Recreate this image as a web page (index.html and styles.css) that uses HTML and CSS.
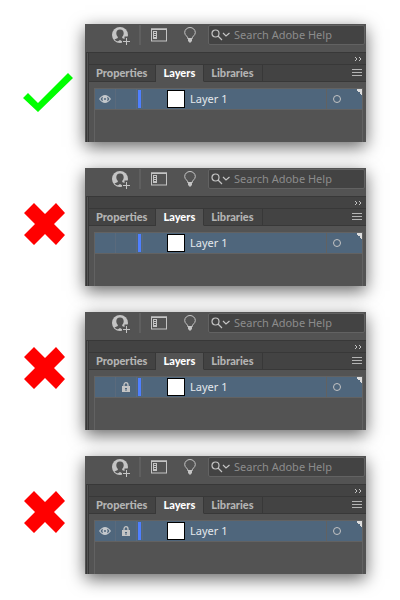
FILE: index.html
```
<!DOCTYPE html>
<html lang="en">
<head>
    <meta charset="UTF-8">
    <meta name="viewport" content="width=device-width, initial-scale=1.0">
    <title>Layers panel</title>
    <link rel="stylesheet" href="styles.css">
</head>
<body>
    <!-- Shared icons -->
    <svg class="sprite" aria-hidden="true">
        <symbol id="check" viewBox="0 0 52 84">
            <path fill="#0f0" d="M1 57l5-5 10 10 30-30 5 5-35 34z"/>
        </symbol>
        <symbol id="cross" viewBox="0 0 52 84">
            <path fill="#f00" d="M12 18l11 11 11-11 9 10-11 11 11 11-9 10-11-11-11 11-10-10 11-11-11-11z"/>
        </symbol>
        <symbol id="user" viewBox="0 0 20 20">
            <circle cx="9" cy="9" r="8" fill="#c4c4c4"/>
            <path fill="#535353" d="M9 3.500c2.500 0 3.700 1.500 3.700 3.700 0 1.600-.6 2.700-1.500 3.600v1.200l3.300 1.500c-1.300 1.400-2.500 1.800-3.500 1.800L9 14l-2 1.300c-1.200 0-2.500-.6-3.500-1.800L6.800 12v-1.200C5.900 9.900 5.300 8.800 5.300 7.200 5.300 5 6.500 3.500 9 3.500z"/>
            <path stroke="#535353" stroke-width="4" d="M15.500 10.500v9M11 15.500h9"/>
            <path stroke="#c4c4c4" d="M15.500 12v7M12 15.500h7"/>
        </symbol>
        <symbol id="window" viewBox="0 0 16 14">
            <rect x=".5" y="1" width="15" height="12" fill="none" stroke="#c4c4c4"/>
            <path fill="#c4c4c4" d="M0 .5h16v1.500H0zM2 3h4v8H2z"/>
            <path fill="#535353" d="M3 4h2v1H3zM3 6h2v1H3zM3 8h2v1H3z"/>
        </symbol>
        <symbol id="bulb" viewBox="0 0 12 16">
            <path fill="none" stroke="#c4c4c4" d="M4 12C4 9 .7 8.700.7 5.500a5.300 5 0 0 1 10.600 0C11.300 8.700 8 9 8 12"/>
            <path fill="#c4c4c4" d="M4 11h4v3l-2 2-2-2z"/>
        </symbol>
        <symbol id="search" viewBox="0 0 20 12">
            <g fill="none" stroke="#c4c4c4" stroke-width="1.200">
                <circle cx="4.500" cy="4.500" r="3.500"/>
                <path d="M7 7l4 4M12 4l3 3 3.500-3"/>
            </g>
        </symbol>
        <symbol id="expand" viewBox="0 0 8 6">
            <path fill="none" stroke="#c4c4c4" d="M1 1l2 2-2 2M5 1l2 2-2 2"/>
        </symbol>
        <symbol id="menu" viewBox="0 0 10 8">
            <path stroke="#b4b4b4" d="M0 .5h10M0 3.500h10M0 6.500h10"/>
        </symbol>
        <symbol id="eye" viewBox="0 0 12 8">
            <path fill="#c4c8cc" d="M0 4Q3 0 6 0t6 4Q9 8 6 8T0 4z"/>
            <path fill="#4f667c" d="M1.500 4Q2.500 2.200 4 1.700 2.800 4 4 6.300 2.500 5.800 1.500 4zM10.500 4Q9.500 2.200 8 1.700 9.200 4 8 6.300 9.500 5.800 10.500 4z"/>
            <circle cx="6" cy="4" r="1" fill="#4f667c"/>
        </symbol>
        <symbol id="lock" viewBox="0 0 8 10">
            <path fill="none" stroke="#c4c4c4" stroke-width="1.300" d="M2 5V3a2 2.300 0 0 1 4 0v2"/>
            <path fill="#c4c4c4" d="M0 4h8v6H0z"/>
            <path fill="#4f667c" d="M3 6h2v1H4.500v2h-1V7H3z"/>
        </symbol>
    </svg>

    <main class="examples">
        <section class="example">
            <svg class="mark" role="img" aria-label="Correct"><use href="#check"/></svg>
            <div class="app">
                <div class="toolbar">
                    <button class="tool user" aria-label="Account"><svg><use href="#user"/></svg></button>
                    <button class="tool window" aria-label="Workspace"><svg><use href="#window"/></svg></button>
                    <button class="tool bulb" aria-label="Learn"><svg><use href="#bulb"/></svg></button>
                    <label class="search">
                        <svg><use href="#search"/></svg>
                        <input type="text" placeholder="Search Adobe Help" aria-label="Search Adobe Help">
                    </label>
                </div>
                <div class="panel">
                    <div class="collapse"><button aria-label="Collapse"><svg><use href="#expand"/></svg></button></div>
                    <div class="tabs">
                        <button class="tab">Properties</button>
                        <button class="tab active">Layers</button>
                        <button class="tab">Libraries</button>
                        <button class="menu" aria-label="Panel menu"><svg><use href="#menu"/></svg></button>
                    </div>
                    <div class="layers">
                        <div class="layer">
                            <button class="toggle" aria-label="Visibility"><svg class="eye"><use href="#eye"/></svg></button>
                            <button class="toggle" aria-label="Lock"></button>
                            <span class="color"></span>
                            <span class="name"><span class="thumb"></span>Layer 1</span>
                            <button class="target" aria-label="Target"><span class="ring"></span></button>
                        </div>
                    </div>
                </div>
            </div>
        </section>

        <section class="example">
            <svg class="mark" role="img" aria-label="Wrong"><use href="#cross"/></svg>
            <div class="app">
                <div class="toolbar">
                    <button class="tool user" aria-label="Account"><svg><use href="#user"/></svg></button>
                    <button class="tool window" aria-label="Workspace"><svg><use href="#window"/></svg></button>
                    <button class="tool bulb" aria-label="Learn"><svg><use href="#bulb"/></svg></button>
                    <label class="search">
                        <svg><use href="#search"/></svg>
                        <input type="text" placeholder="Search Adobe Help" aria-label="Search Adobe Help">
                    </label>
                </div>
                <div class="panel">
                    <div class="collapse"><button aria-label="Collapse"><svg><use href="#expand"/></svg></button></div>
                    <div class="tabs">
                        <button class="tab">Properties</button>
                        <button class="tab active">Layers</button>
                        <button class="tab">Libraries</button>
                        <button class="menu" aria-label="Panel menu"><svg><use href="#menu"/></svg></button>
                    </div>
                    <div class="layers">
                        <div class="layer">
                            <button class="toggle" aria-label="Visibility"></button>
                            <button class="toggle" aria-label="Lock"></button>
                            <span class="color"></span>
                            <span class="name"><span class="thumb"></span>Layer 1</span>
                            <button class="target" aria-label="Target"><span class="ring"></span></button>
                        </div>
                    </div>
                </div>
            </div>
        </section>

        <section class="example">
            <svg class="mark" role="img" aria-label="Wrong"><use href="#cross"/></svg>
            <div class="app">
                <div class="toolbar">
                    <button class="tool user" aria-label="Account"><svg><use href="#user"/></svg></button>
                    <button class="tool window" aria-label="Workspace"><svg><use href="#window"/></svg></button>
                    <button class="tool bulb" aria-label="Learn"><svg><use href="#bulb"/></svg></button>
                    <label class="search">
                        <svg><use href="#search"/></svg>
                        <input type="text" placeholder="Search Adobe Help" aria-label="Search Adobe Help">
                    </label>
                </div>
                <div class="panel">
                    <div class="collapse"><button aria-label="Collapse"><svg><use href="#expand"/></svg></button></div>
                    <div class="tabs">
                        <button class="tab">Properties</button>
                        <button class="tab active">Layers</button>
                        <button class="tab">Libraries</button>
                        <button class="menu" aria-label="Panel menu"><svg><use href="#menu"/></svg></button>
                    </div>
                    <div class="layers">
                        <div class="layer">
                            <button class="toggle" aria-label="Visibility"></button>
                            <button class="toggle" aria-label="Lock"><svg class="lock"><use href="#lock"/></svg></button>
                            <span class="color"></span>
                            <span class="name"><span class="thumb"></span>Layer 1</span>
                            <button class="target" aria-label="Target"><span class="ring"></span></button>
                        </div>
                    </div>
                </div>
            </div>
        </section>

        <section class="example">
            <svg class="mark" role="img" aria-label="Wrong"><use href="#cross"/></svg>
            <div class="app">
                <div class="toolbar">
                    <button class="tool user" aria-label="Account"><svg><use href="#user"/></svg></button>
                    <button class="tool window" aria-label="Workspace"><svg><use href="#window"/></svg></button>
                    <button class="tool bulb" aria-label="Learn"><svg><use href="#bulb"/></svg></button>
                    <label class="search">
                        <svg><use href="#search"/></svg>
                        <input type="text" placeholder="Search Adobe Help" aria-label="Search Adobe Help">
                    </label>
                </div>
                <div class="panel">
                    <div class="collapse"><button aria-label="Collapse"><svg><use href="#expand"/></svg></button></div>
                    <div class="tabs">
                        <button class="tab">Properties</button>
                        <button class="tab active">Layers</button>
                        <button class="tab">Libraries</button>
                        <button class="menu" aria-label="Panel menu"><svg><use href="#menu"/></svg></button>
                    </div>
                    <div class="layers">
                        <div class="layer">
                            <button class="toggle" aria-label="Visibility"><svg class="eye"><use href="#eye"/></svg></button>
                            <button class="toggle" aria-label="Lock"><svg class="lock"><use href="#lock"/></svg></button>
                            <span class="color"></span>
                            <span class="name"><span class="thumb"></span>Layer 1</span>
                            <button class="target" aria-label="Target"><span class="ring"></span></button>
                        </div>
                    </div>
                </div>
            </div>
        </section>
    </main>
</body>
</html>
```
FILE: styles.css
```
:root {
    --panel: #535353;
    --dark: #434343;
    --line: #383838;
    --edge: #626262;
    --row: #4f667c;
    --icon: #c4c4c4;
}

* {
    margin: 0;
    padding: 0;
    box-sizing: border-box;
}

body {
    background-color: white;
    font-family: "Noto Sans", sans-serif;
    font-size: 11px;
    line-height: 16px;
}

button {
    display: flex;
    align-items: center;
    justify-content: center;
    background: none;
    border: none;
    font: inherit;
    color: inherit;
    cursor: pointer;
}

svg {
    display: block;
    flex: none;
}

.sprite {
    position: absolute;
    width: 0;
    height: 0;
}

.examples {
    display: grid;
    grid-template-columns: minmax(0, 1fr);
    gap: 26px;
    padding: 24px 34px 24px 22px;
}

.example {
    display: flex;
    align-items: center;
    gap: 11px;
}

.mark {
    width: 52px;
    height: 84px;
}

.app {
    flex: 1;
    min-width: 0;
    background-color: var(--panel);
    box-shadow: 0 5px 16px rgba(0, 0, 0, 0.6);
}

/* Top bar */
.toolbar {
    display: flex;
    height: 28px;
    padding: 1px 1px 7px 24px;
}

.user {
    width: 32px;
    padding: 1px 7px 0 0;
    border-right: 2px solid #5f5f5f;
}

.user svg {
    width: 20px;
    height: 20px;
}

.window {
    width: 36px;
}

.window svg {
    width: 16px;
    height: 14px;
}

.bulb {
    width: 26px;
}

.bulb svg {
    width: 12px;
    height: 16px;
}

.search {
    display: flex;
    flex: 1;
    min-width: 0;
    align-items: center;
    gap: 3px;
    margin-left: 5px;
    padding-left: 2px;
    background-color: var(--dark);
    border: 1px solid var(--edge);
    border-radius: 2px;
}

.search svg {
    width: 20px;
    height: 12px;
}

.search input {
    flex: 1;
    min-width: 0;
    background: none;
    border: none;
    outline: none;
    font: inherit;
    color: #ddd;
}

.search input::placeholder {
    color: #8c8c8c;
    opacity: 1;
}

/* Docked panel */
.panel {
    margin-left: 1px;
    border-left: 3px double var(--line);
    border-top: 1px solid var(--line);
}

.collapse {
    display: flex;
    justify-content: flex-end;
    height: 11px;
    padding-right: 4px;
    background-color: var(--dark);
}

.collapse svg {
    width: 8px;
    height: 6px;
}

.tabs {
    display: flex;
    height: 18px;
    background-color: var(--dark);
    border-top: 1px solid var(--line);
    font-family: Lato, sans-serif;
    font-weight: 900;
    color: #b4b4b4;
}

.tab {
    padding: 0 8px 1px 7px;
    border-right: 1px solid var(--line);
    border-bottom: 1px solid var(--line);
}

.tab.active {
    background-color: var(--panel);
    border-bottom-color: var(--panel);
    color: white;
}

.menu {
    flex: 1;
    justify-content: flex-end;
    padding-right: 4px;
    border-bottom: 1px solid var(--line);
}

.menu svg {
    width: 10px;
    height: 8px;
}

.layers {
    height: 54px;
    margin: 6px 3px 0 5px;
    border: 1px solid var(--edge);
    border-bottom: none;
}

.layer {
    display: flex;
    height: 21px;
    background-color: var(--row);
    border-bottom: 1px solid var(--edge);
    color: #e4e8ec;
}

.toggle {
    width: 21px;
    border-right: 1px solid #5a6a7c;
}

.eye {
    width: 12px;
    height: 8px;
}

.lock {
    width: 8px;
    height: 10px;
}

.color {
    width: 5px;
    margin: 1px 0 1px 1px;
    border-left: 3px solid #4f80ff;
    border-right: 1px solid #5a6a7c;
}

.name {
    display: flex;
    flex: 1;
    align-items: center;
    gap: 5px;
    padding-left: 24px;
}

.thumb {
    width: 18px;
    height: 18px;
    background-color: white;
    border: 1px solid black;
}

.target {
    justify-content: flex-start;
    width: 36px;
    padding-left: 6px;
    border-left: 1px solid var(--edge);
    background: linear-gradient(45deg, transparent 50%, #ddd 50%) top right / 6px 6px no-repeat;
}

.ring {
    width: 8px;
    height: 8px;
    border: 1px solid var(--icon);
    border-radius: 50%;
}
```
